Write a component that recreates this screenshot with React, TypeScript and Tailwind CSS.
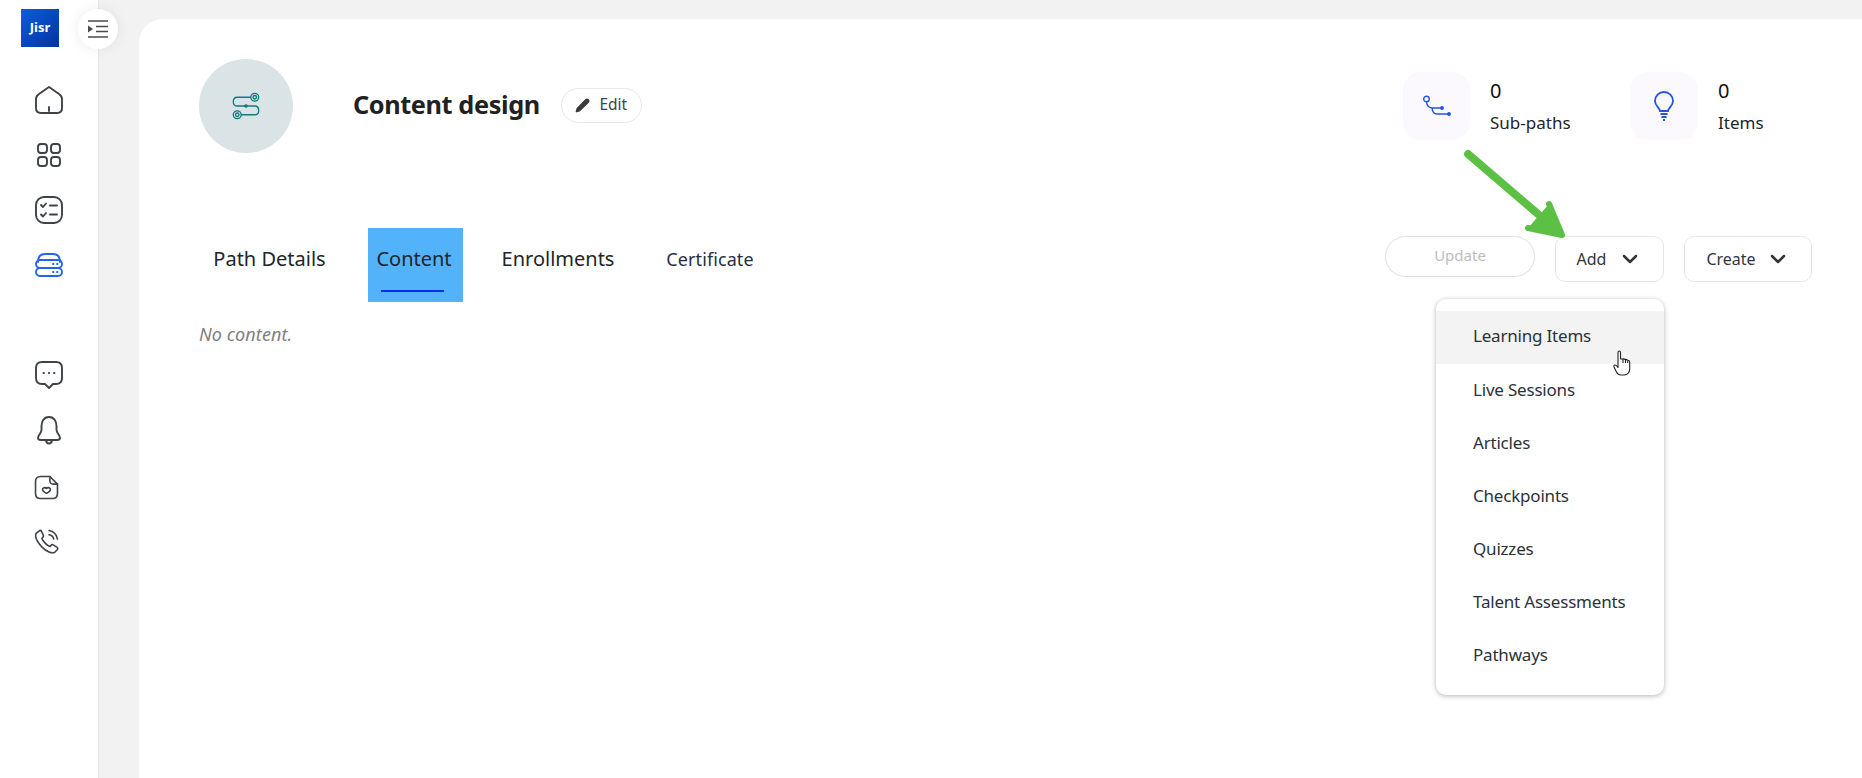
import React from 'react';
import { Pencil, ChevronDown } from 'lucide-react';

const font = { fontFamily: '"Noto Sans", sans-serif' };

const menuItems = ['Learning Items', 'Live Sessions', 'Articles', 'Checkpoints', 'Quizzes', 'Talent Assessments', 'Pathways'];

const tabs = [
  { label: 'Path Details', cls: 'w-[129px] ml-[6px] text-[#212529] text-[20px]' },
  { label: 'Content', cls: 'w-[95px] ml-[34px] pr-[3px] bg-[#53b3fa] text-[#212529] text-[20px]' },
  { label: 'Enrollments', cls: 'w-[120px] ml-[35px] text-[#212529] text-[20px]' },
  { label: 'Certificate', cls: 'w-[100px] ml-[42px] text-[#1f3044] text-[18px] tracking-[0.1px]' },
];

function Svg({ children, size = 32, className = 'text-[#3f4247]' }: { children: React.ReactNode; size?: number; className?: string }) {
  return (
    <svg width={size} height={size} viewBox="0 0 32 32" fill="none" stroke="currentColor" strokeWidth="1.9" strokeLinecap="round" strokeLinejoin="round" className={className}>
      {children}
    </svg>
  );
}

const navTop = [
  <Svg key="home"><path d="M16 3 L6 10 Q3 12 3 15 V24 Q3 29 8 29 H24 Q29 29 29 24 V15 Q29 12 26 10 Z" /><path d="M16 23 V27" /></Svg>,
  <Svg key="grid"><rect x="5" y="5" width="9" height="9" rx="3" /><rect x="18" y="5" width="9" height="9" rx="3" /><rect x="5" y="18" width="9" height="9" rx="3" /><rect x="18" y="18" width="9" height="9" rx="3" /></Svg>,
  <Svg key="tasks"><rect x="3" y="3" width="26" height="26" rx="8" /><path d="M8 11 L10 13 L13 9.5 M8 20.5 L10 22.5 L13 19 M17 11.5 H24 M17 20.5 H24" /></Svg>,
  <Svg key="db" className="text-[#2563f5]"><path d="M5 13 Q5 5 12 5 H20 Q27 5 27 13" /><rect x="3" y="11" width="26" height="8" rx="4" /><rect x="3" y="19" width="26" height="8" rx="4" /><path d="M20 15 H20.5 M24 15 H24.5 M20 23 H20.5 M24 23 H24.5" /></Svg>,
];

export default function App() {
  return (
    <div className="relative flex h-[778px] w-full overflow-hidden bg-[#f2f2f2] text-[#212529]" style={font}>
      {/* Sidebar */}
      <aside className="relative flex w-[99px] shrink-0 flex-col items-center border-r border-[#e6e6e6] bg-white">
        <div className="mt-[9px] mr-[18px] flex h-[38px] w-[38px] items-center justify-center bg-gradient-to-br from-[#0f5be0] to-[#03359f] text-[13px] font-bold text-white">
          Jisr
        </div>
        <div className="mt-[37px] flex flex-col items-center gap-[23px] text-[#3f4247]">
          {navTop}
        </div>
        <div className="mt-[78px] flex flex-col items-center gap-[23px]">
          <Svg key="chat"><path d="M9 3 H23 Q29 3 29 9 V19 Q29 25 23 25 H20 L16 29 L12 25 H9 Q3 25 3 19 V9 Q3 3 9 3 Z" /><path d="M10.5 14 H11 M15.8 14 H16.2 M21 14 H21.5" /></Svg>
          <Svg key="bell"><path d="M16 3 C10.5 3 8.5 8 8.5 12 V16 C8.5 19 5 21 5 24 C5 25.5 6 26 8 26 H24 C26 26 27 25.5 27 24 C27 21 23.5 19 23.5 16 V12 C23.5 8 21.5 3 16 3 Z" /><path d="M13 26 Q13.5 29.5 16 29.5 Q18.5 29.5 19 26" /></Svg>
          <div className="mt-[2px] mr-[5px] flex h-[32px] items-center">
            <Svg key="sticker" size={27}><path d="M20 3 H9 Q3 3 3 9 V23 Q3 29 9 29 H23 Q29 29 29 23 V12 Z" /><path d="M20 3 V8 Q20 12 24 12 H29" /><path d="M16 23 C12 21 11 19 11.5 17.5 C12.5 15.5 15 16 16 17 C17 16 19.5 15.5 20.5 17.5 C21 19 20 21 16 23 Z" /></Svg>
          </div>
          <div className="-mt-[1px] mr-[5px] flex h-[32px] items-center">
            <Svg key="phone" size={27}><path d="M8 3 L4 6 C2 9 4 15 10 22 C16 28 23 31 26 28.5 L29 25.5 C29.5 24.5 29.5 23.5 28.5 23 L24 20 C23 19.5 22 19.5 21.5 20.5 L20 22 C17 21 12 16 10.5 12.5 L12 10.5 C12.5 10 12.5 9 12 8 L10 4 C9.5 3 8.8 2.7 8 3 Z" /><path d="M19 3 C25 4 28 8 29 13 M19 8 C22 8.5 24 10.5 24.5 13" /></Svg>
          </div>
        </div>
        <button className="absolute left-[78px] top-[9px] flex h-10 w-10 items-center justify-center rounded-full bg-white shadow-[0_0_14px_rgba(0,0,0,0.08)]">
          <svg width="22" height="20" viewBox="0 0 22 20" fill="none" stroke="#4a4a4a" strokeWidth="1.6">
            <path d="M1 2 H21 M9 7.5 H21 M9 12.5 H21 M1 18 H21" />
            <path d="M1 6.5 L6 10 L1 13.5 Z" fill="#4a4a4a" stroke="none" />
          </svg>
        </button>
      </aside>

      {/* Main */}
      <main className="flex-1 pl-[40px] pt-[19px]">
        <div className="h-full rounded-tl-[24px] bg-white pl-[60px] pr-[50px] pt-[40px]">
          {/* Header */}
          <div className="flex items-start justify-between">
            <div className="flex items-center">
              <div className="flex h-[94px] w-[94px] items-center justify-center rounded-full bg-[#dae4e6]">
                <svg width="30" height="28" viewBox="0 0 32 32" fill="none" stroke="#0f7a80" strokeWidth="1.5">
                  <circle cx="26" cy="6" r="4.5" />
                  <circle cx="26" cy="6" r="2" />
                  <circle cx="6" cy="26" r="4.5" />
                  <circle cx="6" cy="26" r="2" />
                  <path d="M21.5 6 H6 Q1.5 6 1.5 11 Q1.5 16 6 16 H26 Q30.5 16 30.5 21 Q30.5 26 26 26 H10.5" />
                  <circle cx="16" cy="16" r="1.3" fill="#0f7a80" />
                </svg>
              </div>
              <h1 className="mb-[3px] ml-[60px] text-[25.3px] font-bold leading-none tracking-[-0.4px] text-[#212121]">Content design</h1>
              <button className="mb-[2px] ml-[21px] flex h-[35px] w-[81px] items-center justify-center gap-[9px] rounded-full border border-[#e8e8e8] text-[15.5px] text-[#3a4450]">
                <Pencil size={15} fill="#3a3a3a" stroke="#3a3a3a" />
                Edit
              </button>
            </div>
            <div className="mt-[13px] flex">
              <div className="flex w-[227px] items-start">
                <div className="flex h-[68px] w-[67px] items-center justify-center rounded-[18px] bg-[#fbf9fe]">
                  <svg width="28" height="22" viewBox="0 0 28 22" fill="none" stroke="#2256e0" strokeWidth="1.4">
                    <circle cx="3.5" cy="4" r="2.8" />
                    <path d="M3.5 7 Q4 13 10 13 H19" />
                    <path d="M9 13 Q9.5 19 14 19 H26" />
                    <circle cx="19" cy="13" r="1.2" fill="#2256e0" />
                    <circle cx="26" cy="19" r="1.2" fill="#2256e0" />
                  </svg>
                </div>
                <div className="ml-[20px] flex flex-col pt-[7px]">
                  <span className="text-[20px] leading-[24px] text-[#111]">0</span>
                  <span className="mt-[8px] text-[17px] leading-[24px] text-[#212529]">Sub-paths</span>
                </div>
              </div>
              <div className="flex w-[182px] items-start">
                <div className="flex h-[68px] w-[68px] items-center justify-center rounded-[18px] bg-[#fbf9fe]">
                  <svg width="22" height="30" viewBox="0 0 22 30" fill="none" stroke="#2256e0" strokeWidth="1.8">
                    <path d="M7 20 C6.5 16.5 2 15 2 10 A9 9 0 0 1 20 10 C20 15 15.5 16.5 15 20 Z" />
                    <path d="M7.5 23 H14.5 M8.5 26 H13.5 M10 29 H12" />
                  </svg>
                </div>
                <div className="ml-[20px] flex flex-col pt-[7px]">
                  <span className="text-[20px] leading-[24px] text-[#111]">0</span>
                  <span className="mt-[8px] text-[17px] leading-[24px] text-[#212529]">Items</span>
                </div>
              </div>
            </div>
          </div>

          {/* Tabs and actions */}
          <div className="mt-[75px] flex items-start justify-between">
            <div className="flex">
              {tabs.map((tab) => (
                <div key={tab.label} className={`relative flex h-[74px] items-start justify-center pt-[16px] leading-[30px] ${tab.cls}`}>
                  {tab.label}
                  {tab.label === 'Content' && <span className="absolute bottom-[10px] left-[13px] h-[2px] w-[63px] bg-[#0a2ee6]" />}
                </div>
              ))}
            </div>
            <div className="mt-[8px] flex items-start">
              <button className="h-[41px] w-[150px] rounded-full border border-[#dedede] pb-[2px] text-[15px] text-[#bcbcbc]">Update</button>
              <button className="ml-[20px] flex h-[46px] w-[109px] items-center justify-center gap-[12px] rounded-[10px] border border-[#e6e6e6] text-[16px] text-[#2f3640]">
                Add
                <ChevronDown size={24} strokeWidth={2.5} className="text-[#333]" />
              </button>
              <button className="ml-[20px] flex h-[46px] w-[128px] items-center justify-center gap-[10px] rounded-[10px] border border-[#e6e6e6] text-[16px] text-[#2f3640]">
                Create
                <ChevronDown size={24} strokeWidth={2.5} className="text-[#333]" />
              </button>
            </div>
          </div>

          <p className="mt-[19px] text-[18px] italic leading-[26px] tracking-[0.1px] text-[#808080]">No content.</p>
        </div>
      </main>

      {/* Add dropdown */}
      <div className="absolute left-[1436px] top-[299px] w-[228px] rounded-[10px] bg-white py-[12px] shadow-[0_1px_5px_rgba(0,0,0,0.3)]">
        {menuItems.map((item, i) => (
          <div key={item} className={`flex h-[53.2px] items-center pb-[3px] pl-[37px] text-[17px] tracking-[-0.2px] text-[#2b323a] ${i === 0 ? 'bg-[#f3f3f3]' : ''}`}>
            {item}
          </div>
        ))}
      </div>

      {/* Hand cursor */}
      <svg className="absolute left-[1613px] top-[350px]" width="18" height="26" viewBox="0 0 18 26" fill="white" stroke="#222" strokeWidth="1.1" strokeLinejoin="round">
        <path d="M5 14 V2.5 Q5 1 6.2 1 Q7.5 1 7.5 2.5 V9 L10 9 Q11 8.5 12 9.5 Q13.5 9 14.5 10.2 Q16.5 10 16.7 12 V19 Q16.5 24.5 11 25 H8 Q5 25 3.5 22 L1 17 Q0.5 15 2 15 Q3.5 15 5 17.5 Z" />
        <path d="M10 9 V13 M12.5 10 V13 M14.7 10.5 V13" fill="none" />
      </svg>

      {/* Annotation arrow */}
      <svg className="absolute left-[1460px] top-[148px]" width="112" height="98" viewBox="0 0 112 98" fill="none" stroke="#5cc045" strokeWidth="8" strokeLinecap="round" strokeLinejoin="round">
        <path d="M8 6 L100 85" />
        <path d="M89 56 L102 87 L68 80" strokeWidth="6" fill="#5cc045" />
      </svg>
    </div>
  );
}
